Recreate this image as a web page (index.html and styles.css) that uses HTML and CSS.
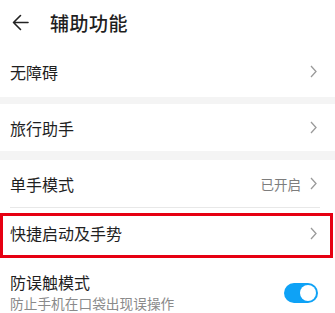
FILE: index.html
```html
<!DOCTYPE html>
<html lang="zh">
<head>
<meta charset="UTF-8" />
<meta name="viewport" content="width=device-width, initial-scale=1"/>
<title>辅助功能</title>
<link rel="stylesheet" href="styles.css">
</head>
<body>

<!-- Шапка -->
<div class="header">
  <svg class="back" width="17" height="17" viewBox="0 0 17 17">
    <path d="M16 8.5H1.5M8.5 1.5l-7 7 7 7" fill="none" stroke="#222" stroke-width="1.6" stroke-linecap="round" stroke-linejoin="round"/>
  </svg>
  <h1>辅助功能</h1>
</div>

<div class="group first">
  <div class="row">
    <span class="label">无障碍</span>
    <svg class="chevron" width="7" height="13" viewBox="0 0 7 13"><path d="M1 1l5 5.5L1 12" fill="none" stroke="#9a9a9a" stroke-width="1.3"/></svg>
  </div>
</div>

<div class="gap"></div>

<div class="group">
  <div class="row">
    <span class="label">旅行助手</span>
    <svg class="chevron" width="7" height="13" viewBox="0 0 7 13"><path d="M1 1l5 5.5L1 12" fill="none" stroke="#9a9a9a" stroke-width="1.3"/></svg>
  </div>
</div>

<div class="gap gap-wide"></div>

<div class="group">
  <div class="row">
    <span class="label">单手模式</span>
    <span class="value">已开启</span>
    <svg class="chevron" width="7" height="13" viewBox="0 0 7 13"><path d="M1 1l5 5.5L1 12" fill="none" stroke="#9a9a9a" stroke-width="1.3"/></svg>
  </div>
  <div class="divider"></div>
  <div class="row marked">
    <span class="label">快捷启动及手势</span>
    <svg class="chevron" width="7" height="13" viewBox="0 0 7 13"><path d="M1 1l5 5.5L1 12" fill="none" stroke="#9a9a9a" stroke-width="1.3"/></svg>
  </div>
  <div class="row double">
    <div class="texts">
      <span class="label">防误触模式</span>
      <span class="hint">防止手机在口袋出现误操作</span>
    </div>
    <div class="switch on"><div class="knob"></div></div>
  </div>
</div>

</body>
</html>
```

FILE: styles.css
```css
* {
    margin: 0;
    padding: 0;
    box-sizing: border-box;
}

body {
    font-family: 'Noto Sans CJK SC', 'Noto Sans', sans-serif;
    background: #fff;
    color: #1f1f1f;
    width: 335px;
    overflow: hidden;
}

/* Шапка */
.header {
    height: 44px;
    display: flex;
    align-items: center;
    padding-left: 12px;
    padding-top: 1px;
}
.header .back {
    margin-right: 21px;
}
.header h1 {
    font-size: 19px;
    font-weight: 500;
    letter-spacing: 0.5px;
}

/* Группы строк */
.group {
    background: #fff;
}
.gap {
    height: 7px;
    background: #f4f4f4;
}
.gap-wide {
    height: 9px;
}

.row {
    height: 47px;
    display: flex;
    align-items: center;
    padding: 0 18px 0 10px;
    position: relative;
}
.group.first .row {
    height: 53px;
    padding-top: 2px;
}
.row .label {
    font-size: 16px;
    flex: 1;
}
.row .value {
    font-size: 13.5px;
    color: #7d7d7d;
    margin-right: 9px;
}
.divider {
    height: 1px;
    background: #e8e8e8;
    margin: 0 15px 0 10px;
}

/* Красная рамка поверх строки */
.row.marked {
    height: 49px;
    padding-top: 1px;
}
.row.marked::after {
    content: '';
    position: absolute;
    top: 5px;
    left: 0;
    right: 2px;
    bottom: -1px;
    border: 3px solid #e60012;
}

.row.double {
    height: 56px;
    align-items: flex-start;
    padding-top: 14px;
}
.texts {
    flex: 1;
    display: flex;
    flex-direction: column;
}
.texts .label {
    line-height: 22px;
}
.texts .hint {
    font-size: 13.7px;
    color: #8a8a8a;
    line-height: 20px;
}

/* Переключатель */
.switch {
    width: 34px;
    height: 20px;
    border-radius: 10px;
    background: #ccc;
    position: relative;
    margin-right: -1px;
    margin-top: 12px;
}
.switch.on {
    background: #0ea2f6;
}
.switch .knob {
    position: absolute;
    top: 2px;
    left: 2px;
    width: 16px;
    height: 16px;
    border-radius: 50%;
    background: #fff;
}
.switch.on .knob {
    left: 16px;
}
```
